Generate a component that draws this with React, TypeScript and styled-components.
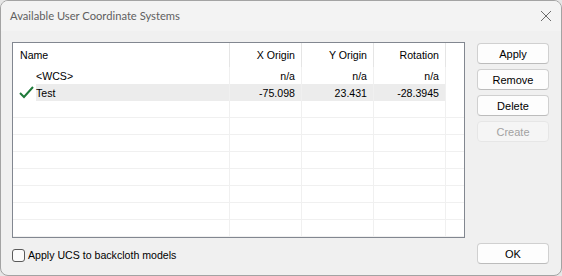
import styled, { createGlobalStyle } from "styled-components";

const Global = createGlobalStyle`
    html, body {
        margin: 0;
        padding: 0;
        background: #e6e6e6;
    }
    body {
        font-family: "Liberation Sans", Arial, sans-serif;
        font-size: 10.6px;
        color: #000;
    }
`

const Window = styled.div`
    box-sizing: border-box;
    width: 562px;
    height: 276px;
    display: flex;
    flex-direction: column;
    background: #f0f0f0;
    border: 1px solid #a3a3a3;
    border-radius: 8px;
    overflow: hidden;
`

const TitleBar = styled.div`
    height: 30px;
    flex-shrink: 0;
    display: flex;
    align-items: center;
    justify-content: space-between;
    padding: 0 9px;
    background: #f3f3f3;
`

const Title = styled.span`
    font-family: Lato, "Noto Sans", sans-serif;
    font-size: 11.2px;
    color: #5f5f5f;
    margin-top: -1px;
`

const Body = styled.div`
    flex: 1;
    display: flex;
    gap: 12px;
    padding: 11px 12px 11px 11px;
`

const LeftColumn = styled.div`
    display: flex;
    flex-direction: column;
`

const List = styled.div`
    box-sizing: border-box;
    width: 453px;
    height: 196px;
    background: #fff;
    border: 1px solid #828790;
    overflow: hidden;
`

const Row = styled.div<{ $header?: boolean; $empty?: boolean }>`
    display: grid;
    grid-template-columns: 217px 72px 72px 72px 1fr;
    height: ${p => (p.$header ? "24px" : "17px")};
    box-sizing: border-box;
    border-bottom: ${p => (p.$empty ? "1px solid #f0f0f0" : "none")};
`

const Cell = styled.div<{ $right?: boolean; $header?: boolean; $selected?: boolean; $last?: boolean }>`
    display: flex;
    align-items: center;
    justify-content: ${p => (p.$right ? "flex-end" : "flex-start")};
    padding: ${p => (p.$right ? "0 6px 0 0" : "0 0 0 7px")};
    border-right: ${p => (p.$last ? "none" : p.$header ? "1px solid #e5e5e5" : "1px solid #f0f0f0")};
    background: ${p => (p.$selected ? "#ececec" : "transparent")};
    white-space: nowrap;
    overflow: hidden;
`

const NameCell = styled.div`
    display: flex;
    align-items: stretch;
    border-right: 1px solid #f0f0f0;
`

const IconSlot = styled.div`
    width: 23px;
    flex-shrink: 0;
    display: flex;
    align-items: center;
    padding-left: 6px;
    box-sizing: border-box;
    background: #fff;
`

const NameText = styled.div<{ $selected?: boolean }>`
    flex: 1;
    display: flex;
    align-items: center;
    background: ${p => (p.$selected ? "#ececec" : "transparent")};
`

const CheckRow = styled.label`
    display: flex;
    align-items: center;
    gap: 3px;
    margin-top: 10px;
    height: 14px;
`

const CheckBox = styled.span`
    box-sizing: border-box;
    width: 13px;
    height: 13px;
    border: 1px solid #5a5a5a;
    border-radius: 3px;
    background: #fbfbfb;
`

const RightColumn = styled.div`
    display: flex;
    flex-direction: column;
    gap: 5px;
    padding-top: 1px;
`

const Button = styled.button<{ $disabled?: boolean }>`
    box-sizing: border-box;
    width: 72px;
    height: 21px;
    padding: 0;
    font-family: "Liberation Sans", Arial, sans-serif;
    font-size: 11px;
    color: ${p => (p.$disabled ? "#a2a2a2" : "#000")};
    background: ${p => (p.$disabled ? "#f5f5f5" : "#fdfdfd")};
    border: 1px solid ${p => (p.$disabled ? "#e6e6e6" : "#d0d0d0")};
    border-bottom-color: ${p => (p.$disabled ? "#e6e6e6" : "#bcbcbc")};
    border-radius: 4px;
`

const Spacer = styled.div`
    flex: 1;
`

const CloseIcon = () => (
    <svg width="12" height="12" viewBox="0 0 12 12">
        <path d="M1 1 L11 11 M11 1 L1 11" stroke="#6b6b6b" strokeWidth="1" fill="none" />
    </svg>
)

const CheckIcon = () => (
    <svg width="15" height="13" viewBox="0 0 15 13">
        <polyline points="1,7 5,11 14,1" stroke="#1f7a3a" strokeWidth="2" fill="none" />
    </svg>
)

const rows = [
    { name: "<WCS>", x: "n/a", y: "n/a", r: "n/a", current: false },
    { name: "Test", x: "-75.098", y: "23.431", r: "-28.3945", current: true },
]

const App = () => {
    return (
        <>
            <Global />
            <Window>
                <TitleBar>
                    <Title>Available User Coordinate Systems</Title>
                    <CloseIcon />
                </TitleBar>
                <Body>
                    <LeftColumn>
                        <List>
                            <Row $header>
                                <Cell $header>Name</Cell>
                                <Cell $header $right>X Origin</Cell>
                                <Cell $header $right>Y Origin</Cell>
                                <Cell $header $right>Rotation</Cell>
                                <Cell $header $last />
                            </Row>
                            {rows.map(row => (
                                <Row key={row.name}>
                                    <NameCell>
                                        <IconSlot>{row.current && <CheckIcon />}</IconSlot>
                                        <NameText $selected={row.current}>{row.name}</NameText>
                                    </NameCell>
                                    <Cell $right $selected={row.current}>{row.x}</Cell>
                                    <Cell $right $selected={row.current}>{row.y}</Cell>
                                    <Cell $right $selected={row.current}>{row.r}</Cell>
                                    <Cell $last />
                                </Row>
                            ))}
                            {Array.from({ length: 8 }).map((_, i) => (
                                <Row key={i} $empty>
                                    <Cell />
                                    <Cell />
                                    <Cell />
                                    <Cell />
                                    <Cell $last />
                                </Row>
                            ))}
                        </List>
                        <CheckRow>
                            <CheckBox />
                            Apply UCS to backcloth models
                        </CheckRow>
                    </LeftColumn>
                    <RightColumn>
                        <Button>Apply</Button>
                        <Button>Remove</Button>
                        <Button>Delete</Button>
                        <Button $disabled>Create</Button>
                        <Spacer />
                        <Button>OK</Button>
                    </RightColumn>
                </Body>
            </Window>
        </>
    )
}

export default App;
